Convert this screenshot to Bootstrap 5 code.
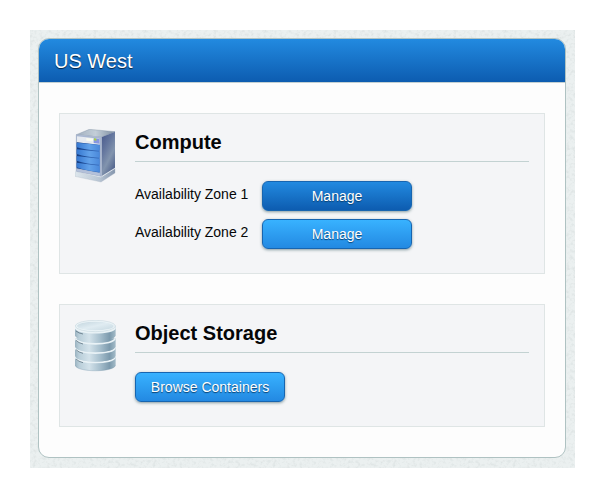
<!DOCTYPE html>
<html lang="en">
<head>
<meta charset="utf-8">
<meta name="viewport" content="width=device-width, initial-scale=1">
<title>US West</title>
<link href="https://cdn.jsdelivr.net/npm/bootstrap@5.3.0/dist/css/bootstrap.min.css" rel="stylesheet">
<style>
body { font-family: "Liberation Sans", Arial, sans-serif; font-size: 14px; line-height: 20px; color: #050607; background: #fff; }
.page { padding: 30px 30px 28px; }
.paper {
  padding: 8px 9px 10px 8px;
  background: #ebf0f0 url("data:image/svg+xml,%3Csvg xmlns='http://www.w3.org/2000/svg' width='120' height='120'%3E%3Cfilter id='n' color-interpolation-filters='sRGB'%3E%3CfeTurbulence type='fractalNoise' baseFrequency='.3' numOctaves='3' stitchTiles='stitch'/%3E%3CfeColorMatrix values='0 0 0 0 .7 0 0 0 0 .74 0 0 0 0 .74 .6 0 0 0 -.27'/%3E%3C/filter%3E%3Crect width='120' height='120' filter='url(%23n)'/%3E%3C/svg%3E");
}
.region { border: 1px solid #afc2c2; border-radius: 11px; background: #fdfdfd; overflow: hidden; }
.region-title {
  padding: 9px 15px 8px;
  background: linear-gradient(#228ae0, #0d5cb0);
  border-bottom: 1px solid #c3d0d2;
}
.region-title h1 { font-size: 20px; line-height: 26px; color: #fff; font-weight: 400; text-shadow: 0 1px 1px #04213f; }
.region-content { padding: 30px 20px; gap: 30px; }
.service { padding: 15px 15px 24px; gap: 15px; background: #f4f5f7; border: 1px solid #dfe5e5; }
.service h2 { font-size: 20px; line-height: 26px; font-weight: 700; padding-bottom: 6px; margin-bottom: 19px; border-bottom: 1px solid #c3d2d2; }
.service-icon { width: 45px; height: 56px; }
.zones { gap: 8px; }
.zone-name { width: 127px; padding-bottom: 4px; }
.btn-glossy {
  --bs-btn-padding-x: 0; --bs-btn-padding-y: 4px; --bs-btn-font-size: 14px; --bs-btn-line-height: 20px;
  --bs-btn-color: #fff; --bs-btn-hover-color: #fff; --bs-btn-active-color: #fff;
  --bs-btn-border-color: #1765b0; --bs-btn-hover-border-color: #1765b0; --bs-btn-active-border-color: #1765b0;
  --bs-btn-border-radius: 6px;
  width: 150px;
  background: linear-gradient(#38b2ff, #2389e2);
  box-shadow: 0 1px 3px rgba(40, 80, 90, .55);
  text-shadow: 0 1px 1px #0a4070;
}
.btn-glossy.active, .btn-glossy:hover { background: linear-gradient(#228ae0, #0d5cb0); }
</style>
<script src="https://cdn.jsdelivr.net/npm/bootstrap@5.3.0/dist/js/bootstrap.bundle.min.js"></script>
</head>
<body>
<main class="page">
  <div class="paper">
    <section class="region">
      <header class="region-title"><h1 class="mb-0">US West</h1></header>
      <div class="region-content d-flex flex-column">

        <article class="service d-flex">
          <svg class="service-icon flex-shrink-0" viewBox="0 0 135 168" aria-hidden="true">
            <defs>
              <linearGradient id="side" x1="0" y1="0" x2=".6" y2="1"><stop offset="0" stop-color="#45568a"/><stop offset=".4" stop-color="#64769e"/><stop offset=".7" stop-color="#8294ae"/><stop offset="1" stop-color="#566890"/></linearGradient>
              <linearGradient id="lid"><stop offset="0" stop-color="#a3b1c0"/><stop offset=".5" stop-color="#c3ced8"/><stop offset="1" stop-color="#7d8ea2"/></linearGradient>
              <linearGradient id="bay" x1="0" y1="0" x2="1" y2="0"><stop offset="0" stop-color="#3577d0"/><stop offset=".55" stop-color="#62a2ea"/><stop offset="1" stop-color="#4a88da"/></linearGradient>
              <linearGradient id="gap"><stop offset="0" stop-color="#123a80"/><stop offset="1" stop-color="#3a72c4"/></linearGradient>
              <linearGradient id="foot"><stop offset="0" stop-color="#dde6ec"/><stop offset=".6" stop-color="#b9c6d4"/><stop offset="1" stop-color="#8596ae"/></linearGradient>
            </defs>
            <path d="M0 126 78 144 120 118V132L78 159 0 142Z" fill="url(#foot)" stroke="#a9b7c6"/>
            <path d="M0 126 78 144 120 118" fill="none" stroke="#f3f7fa" stroke-width="2"/>
            <path d="M4 17 43 1 120 8 79 25Z" fill="url(#lid)" stroke="#74869a"/>
            <path d="M79 25 120 8V116L79 142Z" fill="url(#side)"/>
            <path d="M4 17 79 25V142L4 127Z" fill="#a9b8d2" stroke="#6c80a4"/>
            <path d="M6 22 73 29V49L6 40Z" fill="#e6eaf0"/>
            <path d="M34 27 54 29V37L34 35Z" fill="#f8faf0"/>
            <path d="M56 28 73 30V44L56 42Z" fill="#8796e0"/>
            <path d="M57 28 64 29V35L57 34Z" fill="#a8d23e"/>
            <path d="M5 40 74 47V131L5 118Z" fill="url(#gap)"/>
            <g fill="url(#bay)">
              <path d="M5 41 74 48V65Q34 64 5 55Z"/><path d="M5 61 74 68V86Q34 85 5 75Z"/>
              <path d="M5 81 74 89V107Q34 105 5 95Z"/><path d="M5 101 74 110V129Q34 126 5 115Z"/>
            </g>
            <path d="M5 120 74 133V140L5 126Z" fill="#b4c1da"/>
            <path d="M4 17 79 25V142" fill="none" stroke="#b9c6d8" stroke-width="2"/>
          </svg>
          <div class="flex-grow-1">
            <h2>Compute</h2>
            <div class="zones d-flex flex-column">
              <div class="d-flex align-items-center">
                <span class="zone-name" id="zone1">Availability Zone 1</span>
                <button type="button" class="btn btn-glossy active" id="manage1" aria-labelledby="manage1 zone1">Manage</button>
              </div>
              <div class="d-flex align-items-center">
                <span class="zone-name" id="zone2">Availability Zone 2</span>
                <button type="button" class="btn btn-glossy" id="manage2" aria-labelledby="manage2 zone2">Manage</button>
              </div>
            </div>
          </div>
        </article>

        <article class="service d-flex">
          <svg class="service-icon flex-shrink-0" viewBox="0 0 135 168" aria-hidden="true">
            <defs>
              <linearGradient id="steel"><stop offset="0" stop-color="#9ab2c0"/><stop offset=".1" stop-color="#b9ced9"/><stop offset=".35" stop-color="#d3e2ea"/><stop offset=".6" stop-color="#a9c1cf"/><stop offset=".85" stop-color="#7c9aad"/><stop offset="1" stop-color="#a3bbc8"/></linearGradient>
              <linearGradient id="cap" x1="0" y1="0" x2="1" y2="1"><stop offset="0" stop-color="#c3d5de"/><stop offset=".5" stop-color="#e0ecf2"/><stop offset="1" stop-color="#c6d8e1"/></linearGradient>
              <g id="disk">
                <path d="M0 0V24C0 47 122 47 122 24V0Z" fill="url(#steel)"/>
                <path d="M2 0C2 22 120 22 120 0" fill="none" stroke="#e9f2f6" stroke-width="5"/>
                <path d="M3 6Q11 14 24 17" fill="none" stroke="#4a6070" stroke-width="2"/>
              </g>
            </defs>
            <use href="#disk" y="111"/>
            <use href="#disk" y="83"/>
            <use href="#disk" y="55"/>
            <path d="M0 17V46C0 69 122 69 122 46V17Z" fill="url(#steel)"/>
            <path d="M0 17V25C0 46 122 46 122 25V17Z" fill="#e9f2f6"/>
            <path d="M3 33Q11 40 24 42" fill="none" stroke="#4a6070" stroke-width="2"/>
            <ellipse cx="61" cy="18" rx="60" ry="17" fill="#edf5f8" stroke="#a7bfcb"/>
            <ellipse cx="61" cy="18" rx="55" ry="13" fill="url(#cap)"/>
            <path d="M1 135C1 158 121 158 121 135" fill="none" stroke="#7899ac" stroke-width="1"/>
          </svg>
          <div class="flex-grow-1">
            <h2>Object Storage</h2>
            <button type="button" class="btn btn-glossy d-block">Browse Containers</button>
          </div>
        </article>

      </div>
    </section>
  </div>
</main>
</body>
</html>
